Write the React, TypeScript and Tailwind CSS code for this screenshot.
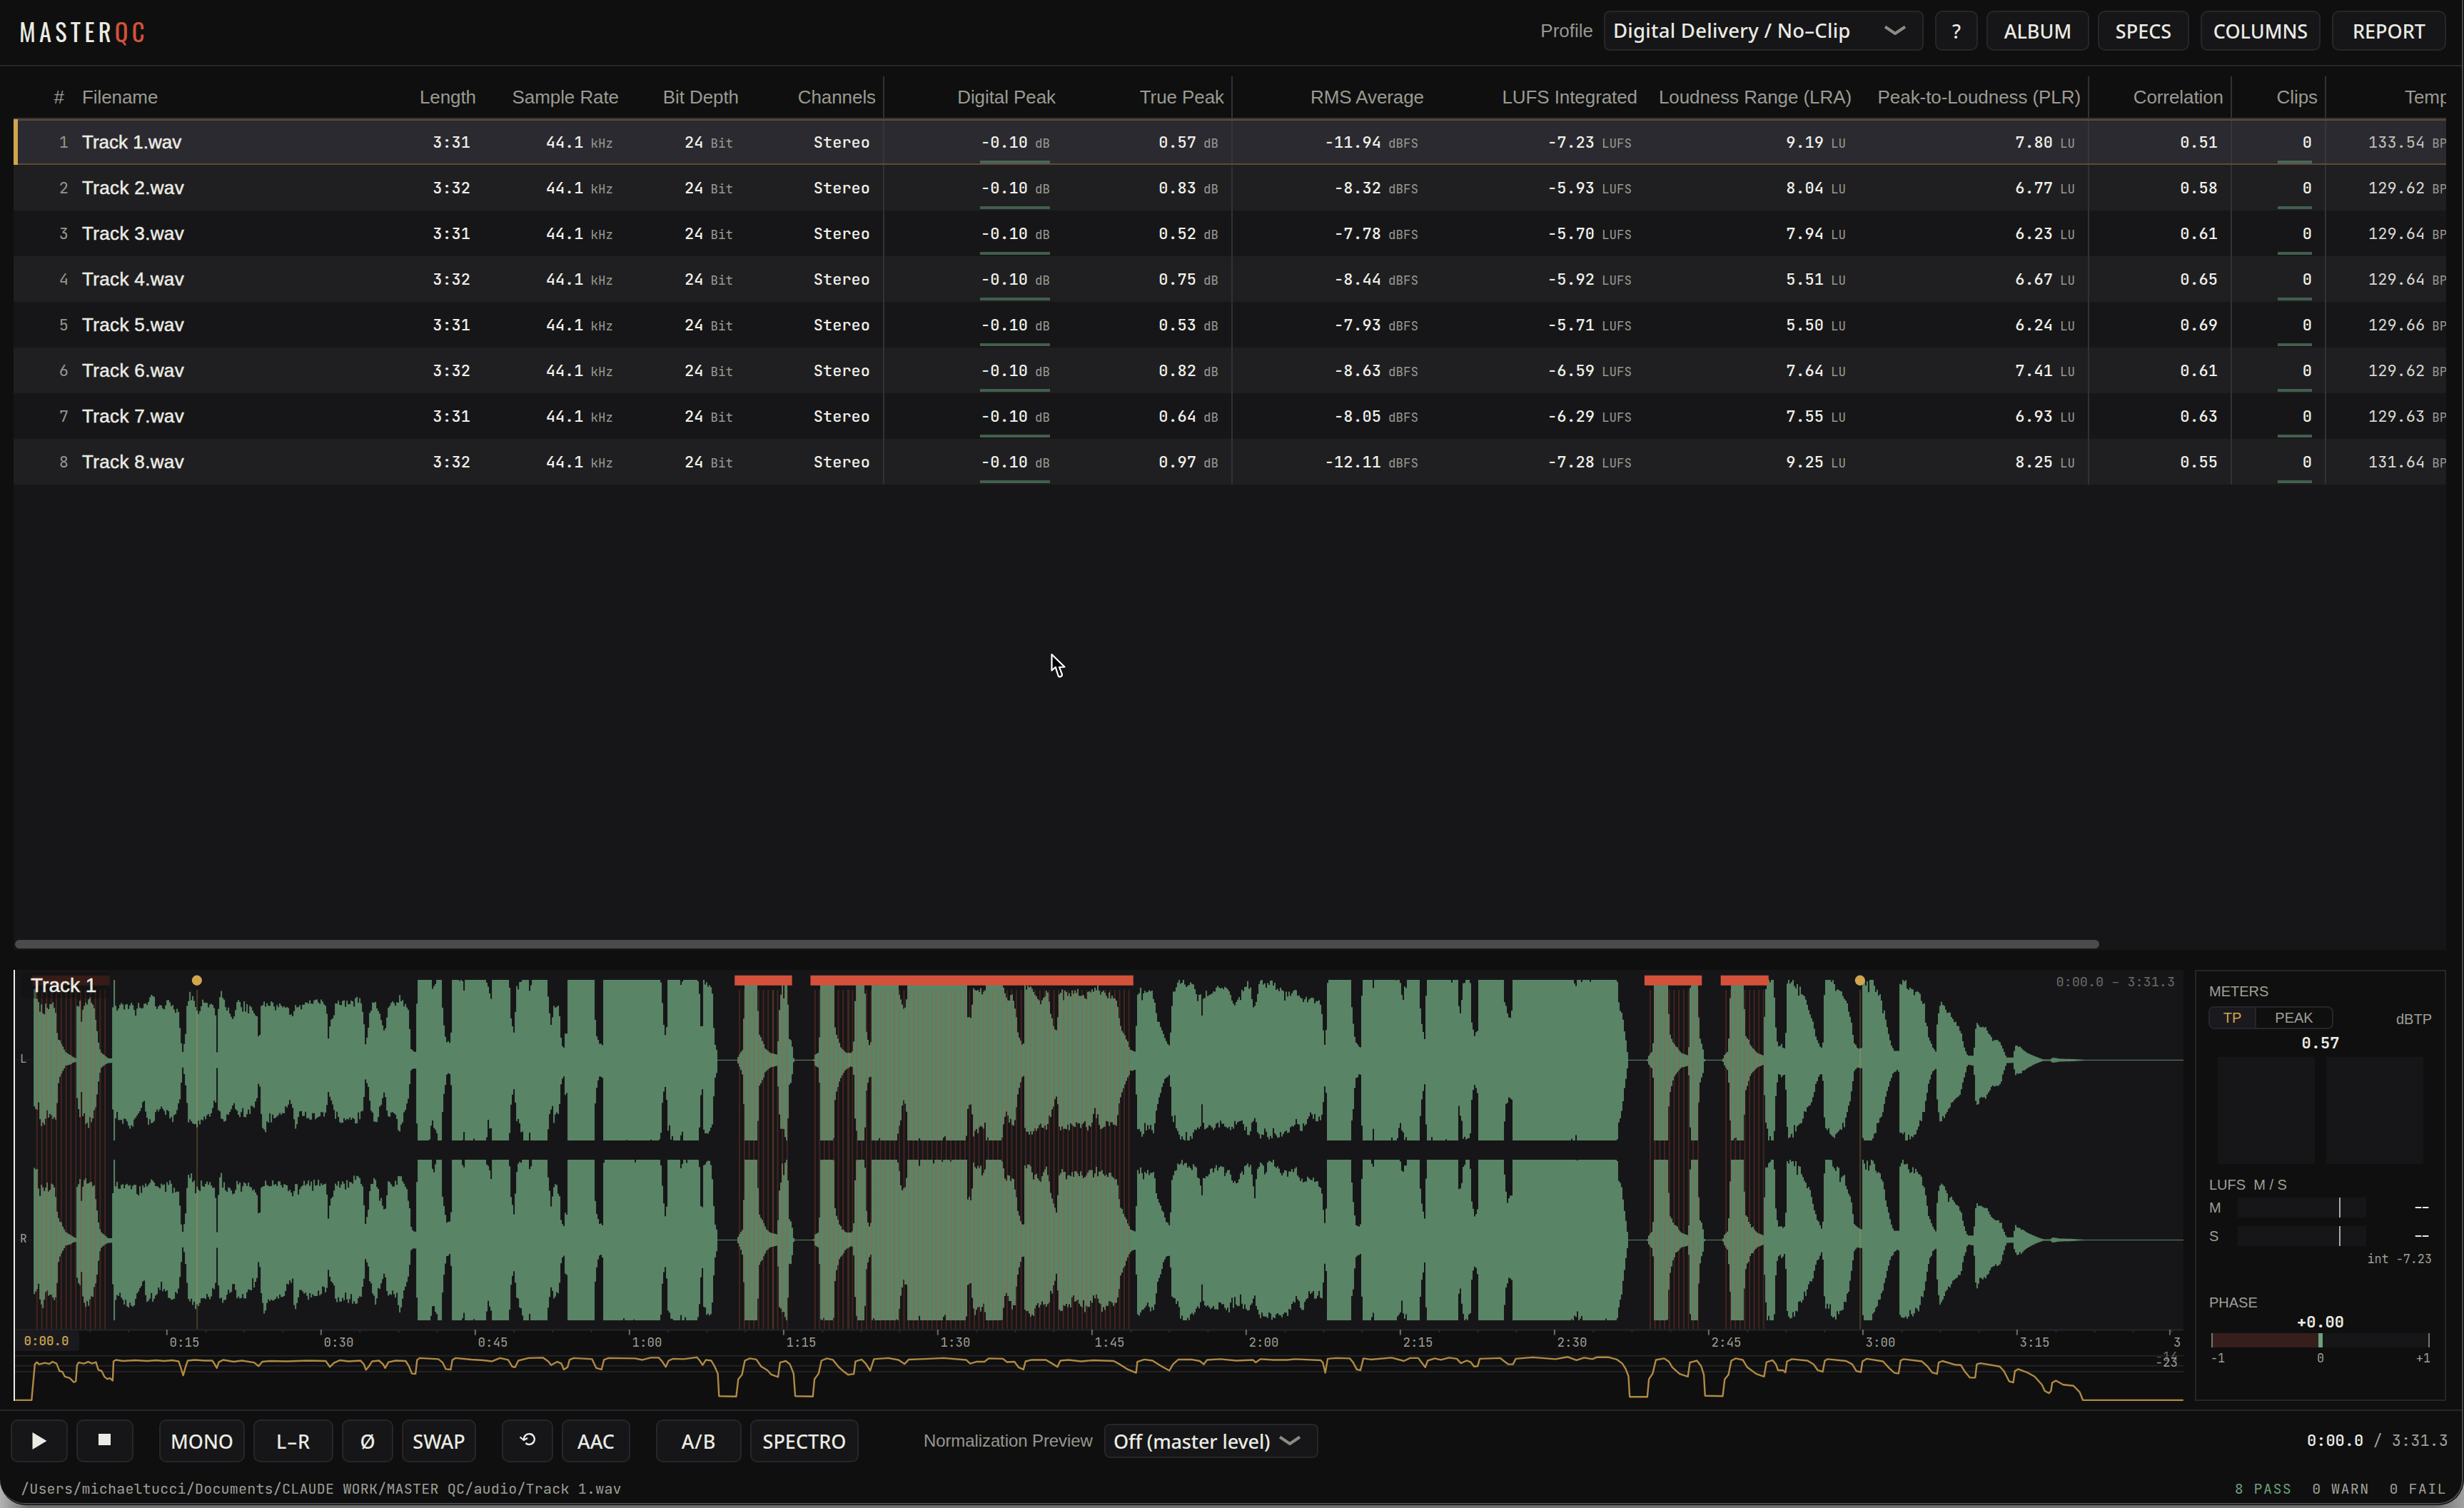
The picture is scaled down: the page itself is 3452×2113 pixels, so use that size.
import React from "react";
import type { ReactNode } from "react";

const SANS = "font-['Liberation_Sans',Arial,sans-serif]";
const MONO = "font-['JetBrains_Mono','Noto_Sans_Mono','DejaVu_Sans_Mono',monospace]";
const UI = "font-['Noto_Sans','Open_Sans',sans-serif]";

/* ---------- table ---------- */

type Track = [string, string, string, string, string, string, string, string, string];
// length, true peak, rms, lufs, lra, plr, correlation, tempo, digital peak
const tracks: Track[] = [
  ["3:31", "0.57", "-11.94", "-7.23", "9.19", "7.80", "0.51", "133.54", "-0.10"],
  ["3:32", "0.83", "-8.32", "-5.93", "8.04", "6.77", "0.58", "129.62", "-0.10"],
  ["3:31", "0.52", "-7.78", "-5.70", "7.94", "6.23", "0.61", "129.64", "-0.10"],
  ["3:32", "0.75", "-8.44", "-5.92", "5.51", "6.67", "0.65", "129.64", "-0.10"],
  ["3:31", "0.53", "-7.93", "-5.71", "5.50", "6.24", "0.69", "129.66", "-0.10"],
  ["3:32", "0.82", "-8.63", "-6.59", "7.64", "7.41", "0.61", "129.62", "-0.10"],
  ["3:31", "0.64", "-8.05", "-6.29", "7.55", "6.93", "0.63", "129.63", "-0.10"],
  ["3:32", "0.97", "-12.11", "-7.28", "9.25", "8.25", "0.55", "131.64", "-0.10"],
];

const GRID =
  "grid grid-cols-[85px_396px_179px_200px_168px_192px_252px_236px_280px_299px_300px_321px_200px_132px_168px]";

const headers: { label: string; line?: boolean }[] = [
  { label: "Length" },
  { label: "Sample Rate" },
  { label: "Bit Depth" },
  { label: "Channels", line: true },
  { label: "Digital Peak" },
  { label: "True Peak", line: true },
  { label: "RMS Average" },
  { label: "LUFS Integrated" },
  { label: "Loudness Range (LRA)" },
  { label: "Peak-to-Loudness (PLR)", line: true },
  { label: "Correlation", line: true },
  { label: "Clips", line: true },
];

function Unit({ children }: { children: ReactNode }) {
  return <span className="mt-[4px] ml-[10px] text-[17.5px] leading-none text-[#9a9a93]">{children}</span>;
}

function Cell({
  value,
  unit,
  line,
  mark,
  selected,
}: {
  value: string;
  unit?: string;
  line?: boolean;
  mark?: string;
  selected?: boolean;
}) {
  return (
    <div
      className={`relative flex h-full items-center justify-end ${
        line ? `border-r-2 pr-[18px] ${selected ? "border-[#36363b]" : "border-[#323235]"}` : "pr-5"
      }`}
    >
      <span className="font-medium text-[#f0f0ea]">{value}</span>
      {unit && <Unit>{unit}</Unit>}
      {mark && (
        <span
          className={`absolute bottom-[2px] h-1 ${line ? "right-[18px]" : "right-5"} ${mark} ${
            selected ? "bg-[#4b6658]" : "bg-[#425f4d]"
          }`}
        />
      )}
    </div>
  );
}

function TrackTable() {
  return (
    <div className="h-[1224px] w-[3408px] overflow-hidden bg-[#161618]">
      <div
        className={`${GRID} ${SANS} h-[60px] border-b-2 border-[#333338] bg-[#0f0f0f] text-[26px] tracking-[-0.08px] text-[#9a9a93]`}
      >
        <div className="flex items-center justify-end pr-[14px]">#</div>
        <div className="flex items-center pl-[11px]">Filename</div>
        {headers.map((h) => (
          <div
            key={h.label}
            className={`flex items-center justify-end whitespace-nowrap ${
              h.line ? "border-r-2 border-[#323235] pr-[10px]" : "pr-3"
            }`}
          >
            {h.label}
          </div>
        ))}
        <div className="flex items-center overflow-hidden pl-[110px]">Tempo</div>
      </div>
      {tracks.map((t, i) => {
        const s = i === 0;
        return (
          <div
            key={i}
            className={`${GRID} ${MONO} relative h-16 text-[22px] ${
              s ? "bg-[#2b2a30]" : i % 2 ? "bg-[#1f1f21]" : "bg-[#161618]"
            }`}
          >
            <div className="flex items-center justify-end pr-[8px] text-[#96968f]">{i + 1}</div>
            <div
              className={`${SANS} flex items-center pl-[11px] text-[26px] text-[#ebebe4] [-webkit-text-stroke:0.5px_#ebebe4] ${
                s ? "" : "tracking-[0.35px]"
              }`}
            >
              Track {i + 1}.wav
            </div>
            <Cell value={t[0]} />
            <Cell value="44.1" unit="kHz" />
            <Cell value="24" unit="Bit" />
            <Cell value="Stereo" line selected={s} />
            <Cell value={t[8]} unit="dB" mark="w-[98px]" selected={s} />
            <Cell value={t[1]} unit="dB" line selected={s} />
            <Cell value={t[2]} unit="dBFS" />
            <Cell value={t[3]} unit="LUFS" />
            <Cell value={t[4]} unit="LU" />
            <Cell value={t[5]} unit="LU" line selected={s} />
            <Cell value={t[6]} line selected={s} />
            <Cell value="0" line mark="w-12" selected={s} />
            <div className="flex items-center overflow-hidden pl-[59px]">
              <span className={s ? "text-[#c0c0ba]" : "text-[#d8d8d2]"}>{t[7]}</span>
              <Unit>BPM</Unit>
            </div>
            {s && (
              <>
                <span className="absolute inset-0 border-y-2 border-[#5b4b35]" />
                <span className="absolute inset-y-0 left-0 w-[6px] bg-[#d0a54e]" />
              </>
            )}
          </div>
        );
      })}
      <div className="mt-[638px] ml-[2px] h-3 w-[2920px] rounded-full bg-[#4b4b4b]" />
    </div>
  );
}

/* ---------- waveform ---------- */

// Envelope breakpoints: [x, upper, lower]; 1.742 x-units per pixel, full scale is 217.
const SECTIONS: { at: number; pts: number[] }[] = [
  {
    at: 0,
    pts: [
      82,190,140, 92,190,140, 93,95,85, 97,155,175, 105,125,178, 112,155,140, 117,140,150, 128,155,155, 134,130,165,
      138,70,110, 142,55,50, 150,40,35, 158,22,15, 170,14,12, 178,8,6, 184,5,5, 186,140,100, 194,160,150, 198,85,60,
      201,155,165, 215,165,178, 228,150,140, 234,90,110, 240,35,40, 246,20,20, 255,12,12, 262,5,8, 273,5,7,
      274,217,217, 280,217,217, 280.5,150,155, 300,145,165, 320,145,182, 335,145,145, 351,150,105, 355,145,165,
      370,172,170, 385,140,130, 405,158,140, 420,145,165, 435,125,130, 440,50,70, 445,18,12, 452,80,70, 457,182,165,
      470,165,170, 484,130,187, 490,155,160, 510,150,155, 524,130,125, 528,20,20, 532,150,150, 538,180,165,
      550,140,155, 570,120,120, 575,155,150, 600,150,150, 625,125,110, 631,40,40, 636,150,150, 643,155,208,
      650,150,170, 670,155,150, 690,150,150, 705,130,110, 712,115,120, 718,150,188, 730,145,140, 745,155,155,
      770,155,150, 795,155,145, 800,55,80, 805,110,110, 813,120,120, 816,150,160, 835,160,165, 850,150,165,
      873,180,165, 885,130,130, 890,40,55, 896,70,60, 903,155,130, 912,160,175, 925,130,140, 935,80,90, 940,85,100,
      945,150,160, 960,150,140, 975,170,200, 985,155,140, 995,130,100, 1002,30,25, 1010,22,22, 1015,23,25,
      1016,217,217, 1048,217,217, 1055,195,175, 1063,217,200, 1066,217,217, 1077,217,217, 1079,110,120, 1088,50,40, 1099,45,38,
      1101,217,217, 1127,217,217, 1130,185,195, 1133,217,217, 1185,217,217, 1190,200,180, 1197,160,190,
      1199,217,217, 1241,217,217, 1246,110,110, 1254,65,75, 1258,190,155, 1272,217,190, 1275,217,217, 1289,217,217,
      1292,185,180, 1295,217,217, 1333,217,217, 1337,150,170, 1345,75,110, 1348,150,165, 1363,140,135, 1368,50,60,
      1374,30,35, 1377,70,90, 1384,70,92, 1385,217,217, 1448,217,217, 1452,80,90, 1460,45,40, 1469,38,45,
      1471,217,217, 1567,217,217,
    ],
  },
  {
    at: 1567.8,
    pts: [
      0,217,217, 43,217,217, 47,150,120, 53,60,65, 58,90,110, 60,217,190, 72,217,212, 75,217,217, 92,217,217,
      94,143,145, 96,217,217, 134,217,217, 138,190,190, 141,90,100, 146,92,68, 148,210,190, 160,205,200, 168,205,205,
      171,110,120, 176,40,50, 182,20,20, 183,1,1, 229,1,1, 233,12,12, 244,30,40, 248,217,217, 279,217,217, 283,70,70,
      292,50,50, 300,30,30, 310,20,20, 328,15,15, 332,130,170, 340,200,190, 345,170,185, 347,217,217, 353,217,217, 355,60,70,
      362,50,60, 367,15,15, 368,1,1, 416,1,1, 420,15,15, 430,22,22, 432,217,217, 465,217,217, 469,80,100, 480,40,50,
      495,20,25, 510,20,15, 516,60,50, 518,200,200, 522,217,217, 541,217,217, 545,80,80, 551,35,50, 557,50,40, 559,217,217,
      621,217,217, 628,160,160, 636,130,110, 643,170,140, 646,217,217, 671,217,217, 674,205,210, 677,217,217,
      732,217,217, 735,217,200, 738,217,217, 789,217,217, 793,115,120, 802,110,120, 805,205,205, 815,195,190,
      834,190,180, 837,217,217, 875,217,217, 885,165,135, 900,170,180, 908,145,170, 915,75,90, 924,45,50, 930,40,40,
      932,200,190, 950,190,200, 970,160,170, 985,190,180, 1000,100,130, 1010,75,90, 1016,190,190, 1040,175,180,
      1060,185,170, 1080,170,190, 1105,200,150, 1120,180,190, 1140,175,170, 1155,170,180, 1165,90,100, 1180,55,55,
      1190,28,30, 1203,22,25, 1205,185,190, 1215,188,200, 1230,180,185, 1246,185,190, 1255,110,120, 1268,80,70,
      1275,55,45, 1286,40,40, 1291,170,150, 1300,195,175, 1312,215,214, 1330,205,216, 1345,200,200, 1355,175,180,
      1363,165,170, 1365,80,75, 1368,175,180, 1400,195,180, 1412,205,170, 1430,180,190, 1448,150,170, 1460,180,170,
      1480,214,200, 1492,130,150, 1505,216,216, 1520,200,200, 1534,216,210, 1560,180,200,
    ],
  },
  {
    at: 2961.4,
    pts: [
      180,180,200, 200,190,160, 215,160,190, 235,165,150, 262,150,160, 268,60,100, 273,22,25, 275,217,217, 333,217,217,
      338,120,150, 345,45,50, 355,38,38, 360,40,40, 361,217,217, 385,217,217, 388,190,195, 391,217,217, 446,217,217,
      455,214,190, 457,217,217, 460,145,150, 463,217,217, 468,195,195, 471,217,217, 501,217,217, 505,110,120, 516,45,50,
      518,217,217, 595,217,217, 598,135,130, 604,135,150, 606,200,200, 612,217,217, 625,217,205, 628,110,110,
      635,65,65, 643,80,90, 644,217,217, 706,217,217, 712,140,130, 720,110,100, 729,130,110, 730,217,217, 879,217,217,
      884,207,197, 887,217,217, 984,217,217, 987,150,180, 994,145,150, 998,110,110, 1004,60,60, 1009,20,20, 1010,1,1, 1057,1,1,
      1062,15,15, 1071,25,25, 1075,217,217, 1106,217,217, 1112,70,90, 1125,40,40, 1140,20,20, 1158,12,15, 1162,200,190,
      1165,217,217, 1181,217,217, 1184,60,70, 1192,40,40, 1196,15,20, 1197,1,1, 1241,1,1, 1246,15,15, 1255,25,30,
      1258,120,120, 1262,217,217, 1292,217,217, 1297,70,80, 1310,40,40, 1325,20,20, 1342,12,12, 1344,180,150,
      1350,205,210, 1360,217,217, 1367,217,217, 1370,100,110, 1376,40,40, 1385,40,45, 1395,30,40, 1397,200,195, 1405,216,214,
      1425,200,185, 1440,170,150, 1460,110,110, 1470,60,60, 1485,25,30,
    ],
  },
  {
    at: 4445.6,
    pts: [
      2,50,60, 5,175,150, 8,217,190, 22,217,195, 30,200,212, 45,180,190, 55,165,175, 65,130,130, 72,100,80, 78,45,30,
      85,35,20, 97,30,22, 99,217,210, 110,205,217, 123,217,217, 130,185,190, 145,170,150, 155,110,100, 165,55,60,
      175,25,30, 189,25,30, 190,200,200, 197,217,210, 215,190,210, 235,180,190, 250,145,130, 260,60,60, 270,35,30,
      279,20,22, 281,120,130, 288,155,170, 300,140,150, 320,110,110, 338,80,90, 348,30,40, 355,12,12, 370,12,15,
      372,50,60, 376,100,137, 385,90,105, 400,90,100, 415,55,70, 435,50,65, 445,20,25, 450,7,8, 467,7,7, 470,38,38,
      485,32,35, 500,20,22, 520,10,10, 540,2,2, 558,2,2, 561,7,7, 580,4,4, 610,3,3, 640,1,1, 883,1,1,
    ],
  },
];

const ENVELOPE: [number, number, number][] = SECTIONS.flatMap((s) => {
  const out: [number, number, number][] = [];
  for (let i = 0; i < s.pts.length; i += 3) out.push([s.pts[i] + s.at, s.pts[i + 1], s.pts[i + 2]]);
  return out;
});

function wavePath(center: number, firstSeed: number) {
  let seed = firstSeed;
  const rand = () => {
    seed = (seed * 1103515245 + 12345) % 2147483648;
    return seed / 2147483648;
  };
  const jitter = (a: number) => {
    if (a >= 216.5) return rand() > 0.975 ? 217 - rand() * 12 : 217;
    if (a < 30) return a;
    const d = (rand() - 0.5) * (a > 120 ? 20 : 8) - (rand() > 0.9 && a > 120 ? 16 : 0);
    return Math.max(2, Math.min(217, a + d));
  };
  const top: string[] = [];
  const bottom: string[] = [];
  let k = 0;
  const step = 3.484;
  for (let x = 82; x < 5329; x += step) {
    while (k < ENVELOPE.length - 2 && ENVELOPE[k + 1][0] <= x) k++;
    const [x0, u0, d0] = ENVELOPE[k];
    const [x1, u1, d1] = ENVELOPE[k + 1];
    const f = Math.max(0, Math.min(1, (x - x0) / (x1 - x0)));
    const u = jitter(u0 + (u1 - u0) * f);
    const d = jitter(d0 + (d1 - d0) * f);
    top.push(`L${x.toFixed(1)} ${(center - u).toFixed(1)}H${(x + step).toFixed(1)}`);
    bottom.push(`L${(x + step).toFixed(1)} ${(center + d).toFixed(1)}H${x.toFixed(1)}`);
  }
  return `M82 ${center}${top.join("")}${bottom.reverse().join("")}Z`;
}

const LOUDNESS: { at: number; pts: number[] }[] = [
  {
    at: 0,
    pts: [
      37,1277, 77,1277, 80,1240, 85,1180, 90,1174, 95,1180, 110,1176, 120,1179, 128,1173, 138,1178, 145,1198, 152,1200,
      158,1213, 170,1217, 180,1228, 185,1226, 188,1182, 192,1175, 205,1178, 215,1173, 225,1178, 234,1174, 240,1195,
      248,1198, 255,1214, 262,1220, 268,1217, 275,1224, 277,1172, 283,1168, 300,1171, 330,1169, 360,1171, 380,1169,
      400,1171, 420,1169, 436,1172, 440,1185, 447,1210, 452,1190, 458,1170, 475,1168, 500,1170, 518,1170, 524,1180,
      529,1190, 534,1174, 545,1168, 570,1173, 590,1170, 620,1175, 631,1185, 640,1173, 660,1171, 700,1172, 750,1170,
      795,1171, 805,1187, 815,1176, 830,1169, 850,1172, 880,1170, 888,1180, 893,1195, 900,1186, 908,1172, 925,1170,
      935,1180, 940,1190, 948,1174, 965,1170, 990,1171, 998,1185, 1005,1205, 1014,1206, 1018,1168, 1024,1163,
      1070,1166, 1080,1175, 1088,1193, 1100,1194, 1104,1168, 1112,1163, 1150,1167, 1180,1169, 1200,1172, 1220,1163,
      1240,1168, 1250,1186, 1257,1188, 1265,1170, 1290,1163, 1325,1162, 1338,1172, 1345,1182, 1360,1173, 1370,1178,
      1376,1194, 1385,1188, 1390,1168, 1400,1163, 1445,1166, 1455,1190, 1468,1194, 1474,1168, 1485,1163, 1550,1164,
    ],
  },
  {
    at: 1567.8,
    pts: [
      0,1168, 20,1162, 40,1162, 48,1172, 57,1187, 64,1170, 75,1165, 100,1166, 133,1161, 140,1170, 147,1182, 155,1168,
      168,1170, 176,1185, 184,1205, 187,1266, 229,1267, 234,1220, 243,1208, 250,1170, 262,1164, 278,1167, 290,1186,
      305,1196, 315,1208, 331,1214, 336,1175, 350,1171, 360,1180, 369,1205, 373,1266, 416,1267, 420,1220, 430,1205,
      437,1170, 450,1164, 465,1168, 478,1186, 492,1200, 502,1208, 516,1206, 520,1172, 535,1167, 545,1178, 556,1197,
      565,1166, 600,1163, 625,1168, 640,1179, 650,1167, 680,1166, 735,1163, 790,1168, 800,1178, 815,1173, 835,1173,
      845,1164, 880,1165, 890,1174, 908,1173, 918,1188, 930,1194, 935,1172, 950,1168, 985,1168, 1000,1178, 1013,1187,
      1020,1170, 1040,1168, 1070,1172, 1100,1169, 1150,1171, 1165,1180, 1185,1194, 1205,1203, 1208,1173, 1225,1167,
      1245,1170, 1265,1184, 1286,1197, 1295,1180, 1308,1167, 1340,1167, 1360,1171, 1370,1180, 1378,1168, 1410,1166,
      1450,1170, 1490,1168, 1497,1175, 1508,1166, 1540,1168,
    ],
  },
  {
    at: 2961.4,
    pts: [
      180,1168, 200,1166, 262,1169, 267,1175, 273,1203, 279,1165, 300,1163, 333,1164, 341,1175, 350,1194, 359,1196,
      366,1164, 384,1167, 435,1162, 465,1171, 480,1163, 500,1163, 508,1175, 517,1188, 523,1170, 540,1164, 555,1168,
      575,1162, 594,1165, 604,1177, 618,1170, 628,1174, 636,1186, 645,1185, 650,1165, 700,1163, 710,1172, 720,1180,
      731,1180, 738,1165, 780,1161, 835,1166, 865,1160, 886,1169, 905,1162, 925,1166, 935,1161, 965,1161, 985,1167,
      998,1178, 1006,1192, 1013,1212, 1016,1268, 1059,1268, 1063,1220, 1072,1205, 1080,1168, 1100,1164, 1112,1173,
      1120,1188, 1138,1206, 1158,1213, 1163,1175, 1180,1170, 1190,1184, 1197,1208, 1200,1265, 1243,1266, 1248,1220,
      1257,1208, 1264,1170, 1275,1164, 1292,1168, 1303,1188, 1325,1206, 1344,1213, 1350,1174, 1365,1169, 1373,1180,
      1378,1196, 1390,1196, 1396,1202, 1400,1172, 1412,1166, 1450,1170, 1465,1180, 1475,1196, 1484,1199,
    ],
  },
  {
    at: 4445.6,
    pts: [
      3,1200, 8,1170, 15,1166, 60,1171, 75,1180, 85,1198, 96,1201, 100,1172, 110,1165, 150,1172, 165,1190, 178,1203,
      188,1205, 193,1170, 200,1166, 245,1172, 258,1185, 270,1202, 282,1206, 286,1175, 295,1171, 325,1181, 340,1182,
      350,1200, 362,1216, 375,1216, 379,1180, 388,1177, 435,1186, 445,1198, 458,1226, 468,1229, 472,1198, 480,1193,
      500,1201, 520,1213, 538,1235, 545,1252, 555,1258, 560,1252, 563,1230, 572,1224, 590,1235, 615,1238, 630,1255,
      638,1277, 883,1277,
    ],
  },
];

const LOUDNESS_POINTS = LOUDNESS.flatMap((s) => {
  const out: string[] = [];
  for (let i = 0; i < s.pts.length; i += 2) out.push(`${(s.pts[i] + s.at).toFixed(1)},${s.pts[i + 1]}`);
  return out;
}).join(" ");

// Clip marker runs, [first, last] in chart units.
const CLIP_RUNS: [number, number][] = [
  [90, 256],
  [1804.8, 1921],
  [1988.8, 2755],
  [4027.4, 4144],
  [4212.4, 4304],
];
const CLIP_LINES = CLIP_RUNS.flatMap(([a, b]) => {
  const n = Math.round((b - a) / 11.5);
  return Array.from({ length: n + 1 }, (_, i) => a + ((b - a) * i) / n);
});

const CLIP_BARS: [number, number][] = [
  [1793, 1933],
  [1978, 2766],
  [4013.5, 4153.5],
  [4199.5, 4316.5],
];

const TICKS = ["0:15", "0:30", "0:45", "1:00", "1:15", "1:30", "1:45", "2:00", "2:15", "2:30", "2:45", "3:00", "3:15"];

function Waveform() {
  return (
    <div className="relative h-[604px] w-[3040px] shrink-0 overflow-hidden bg-[#161618]">
      <svg className="absolute inset-0 h-full w-full" viewBox="33 114 5296 1165" preserveAspectRatio="none">
        <rect x="33" y="1086" width="5296" height="200" fill="#0f0f0f" />
        <rect x="33" y="356" width="5296" height="2" fill="#232326" />
        <rect x="33" y="843" width="5296" height="2" fill="#232326" />
        <path d={wavePath(358, 7)} fill="#5a8466" />
        <path d={wavePath(844, 91)} fill="#5a8466" />
        {CLIP_LINES.map((x) => (
          <rect key={x} x={x - 1.5} y="168" width="3.4" height="917" fill="#c8462f" fillOpacity="0.27" />
        ))}
        {[1886.8, 2071.8].map((x) => (
          <rect key={x} x={x - 1.5} y="168" width="3.4" height="917" fill="#d0a54e" fillOpacity="0.15" />
        ))}
        {[481, 4540].map((x) => (
          <g key={x}>
            <rect x={x - 2} y="168" width="4" height="917" fill="#d0a54e" fillOpacity="0.24" />
            <ellipse cx={x - 0.5} cy="142.5" rx="12.4" ry="13.8" fill="#d0a54e" />
          </g>
        ))}
        <rect x="79" y="129" width="188" height="27" fill="#52231d" />
        {CLIP_BARS.map(([a, b]) => (
          <rect key={a} x={a} y="129" width={b - a} height="27" fill="#d3513a" />
        ))}
        <rect x="33" y="1085" width="5296" height="4" fill="#26262a" />
        {Array.from({ length: 56 }, (_, i) => (
          <rect key={i} x={30 + (i + 1) * 94.08} y="1089" width="3.5" height="4" fill="#333338" />
        ))}
        {TICKS.map((t, i) => (
          <rect key={t} x={405.5 + i * 376.3} y="1086" width="3.5" height="15" fill="#6b6b68" />
        ))}
        <rect x="5294" y="1086" width="3.5" height="15" fill="#6b6b68" />
        {[1155, 1182, 1198].map((y) => (
          <rect key={y} x="33" y={y} width="5296" height="3.9" fill="#222225" />
        ))}
        <polyline
          points={LOUDNESS_POINTS}
          fill="none"
          stroke="#b08a43"
          strokeWidth="2.4"
          strokeLinejoin="round"
          vectorEffect="non-scaling-stroke"
        />
      </svg>

      <div className={`${MONO} text-[17.5px] leading-none text-[#9f9f98]`}>
        <span className="absolute top-[117px] left-[9px] text-[16px]">L</span>
        <span className="absolute top-[369px] left-[9px] text-[16px]">R</span>
        <span className="absolute top-[8px] right-[12px] text-[18.5px] text-[#6c6c68]">0:00.0 – 3:31.3</span>
        {TICKS.map((t, i) => (
          <span key={t} className="absolute top-[513px]" style={{ left: 218.5 + i * 216 }}>
            {t}
          </span>
        ))}
        <span className="absolute top-[513px] left-[3026px] w-[14px] overflow-hidden whitespace-nowrap">3:30</span>
        <span className="absolute top-[533px] right-[8px] text-[#6c6c68]">-14</span>
        <span className="absolute top-[541px] right-[8px] bg-[#0f0f0f]/30">-23</span>
        <div className="absolute top-[506px] left-0 flex h-7 w-[92px] items-center justify-center rounded-[4px] bg-[#1a1a1e] font-medium text-[#d0a54e]">
          0:00.0
        </div>
      </div>
      <div
        className={`${SANS} absolute top-1 left-[11px] flex h-9 w-[123px] items-center rounded-md bg-[#0f0f0f]/40 pl-[13px] text-[28px] whitespace-nowrap text-[#ebebe4] [-webkit-text-stroke:0.5px_#ebebe4]`}
      >
        Track 1
      </div>
      <div className="absolute inset-y-0 left-0 w-[2px] bg-[#f0f0ea]" />
    </div>
  );
}

/* ---------- meters ---------- */

function LufsRow({ label }: { label: string }) {
  return (
    <div className="flex h-7 items-center">
      <span className="w-[40px]">{label}</span>
      <div className="h-7 w-[180px] bg-[#161618]">
        <div className="ml-[142px] h-full w-[2px] bg-[#a9a9a3]" />
      </div>
      <span className={`${MONO} ml-auto pr-[2px] text-[20px] font-medium text-[#ebebe4]`}>--</span>
    </div>
  );
}

function Meters() {
  return (
    <div
      className={`${SANS} flex h-[604px] w-[352px] flex-col border-2 border-[#26262a] bg-[#0f0f0f] px-[18px] pt-[16px] text-[20px] leading-6 text-[#9f9f98]`}
    >
      <div className="h-6">METERS</div>
      <div className="mt-[9px] flex h-8 items-center justify-between">
        <div className="-ml-[1px] flex h-8 w-[175px] overflow-hidden rounded-lg border-2 border-[#26262a]">
          <div className="flex w-[65px] items-center justify-center border-r-2 border-[#26262a] bg-[#1a1a1e] text-[#d0a54e]">
            TP
          </div>
          <div className="flex flex-1 items-center justify-center">PEAK</div>
        </div>
        <span className="mt-1">dBTP</span>
      </div>
      <div className={`${MONO} mt-[8px] text-center text-[22px] font-semibold text-[#ebebe4]`}>0.57</div>
      <div className="mt-[7px] flex justify-center gap-4">
        <div className="h-[150px] w-[136px] bg-[#161618]" />
        <div className="h-[150px] w-[136px] bg-[#161618]" />
      </div>
      <div className="mt-[17px] whitespace-pre">{"LUFS  M / S"}</div>
      <div className="mt-[6px]">
        <LufsRow label="M" />
      </div>
      <div className="mt-3">
        <LufsRow label="S" />
      </div>
      <div className={`${MONO} mt-[6px] text-right text-[16.8px]`}>int -7.23</div>
      <div className="mt-[37px]">PHASE</div>
      <div className={`${MONO} mt-[4px] text-center text-[22px] font-semibold text-[#ebebe4]`}>+0.00</div>
      <div className="mx-[3px] mt-[3px] flex h-5 w-[306px] border-x-2 border-[#77776f] bg-[#161618]">
        <div className="w-[148px] bg-[#361e1d]" />
        <div className="w-[6px] bg-[#6aa37d]" />
      </div>
      <div className={`${MONO} mx-[2px] mt-[3px] flex justify-between text-[16.8px]`}>
        <span>-1</span>
        <span>0</span>
        <span>+1</span>
      </div>
    </div>
  );
}

/* ---------- controls ---------- */

function Button({ className, children }: { className: string; children: ReactNode }) {
  return (
    <div
      className={`${UI} flex shrink-0 items-center justify-center rounded-[10px] border-2 border-[#26262b] bg-[#161618] text-[27px] leading-none font-medium text-[#ebebe4] ${className}`}
    >
      {children}
    </div>
  );
}

function Chevron() {
  return (
    <svg className="h-4 w-8" viewBox="0 0 32 16" fill="none" stroke="#8b8b83" strokeWidth="4">
      <path d="M2 2.5 L16 12 L30 2.5" strokeLinejoin="round" />
    </svg>
  );
}

function Select({ className, children }: { className: string; children: ReactNode }) {
  return (
    <div
      className={`${UI} flex shrink-0 items-center justify-between rounded-lg border-2 border-[#26262b] bg-[#161618] pl-[11px] leading-none font-medium text-[#ebebe4] ${className}`}
    >
      {children}
      <Chevron />
    </div>
  );
}

function Header() {
  return (
    <header className="flex h-[93px] items-start border-b-2 border-[#26262a] pt-[15px] pr-[22px]">
      <div className="ml-[27px] font-['Oswald','Roboto_Condensed',sans-serif] text-[34.5px] leading-[58px] tracking-[5.3px] text-[#ebebe4]">
        MASTER<span className="text-[#d3513a]">QC</span>
      </div>
      <span className={`${SANS} mr-[15px] ml-auto text-[26px] leading-[56px] text-[#96968f]`}>Profile</span>
      <Select className="h-14 w-[448px] pr-[22px] text-[27.5px] tracking-[0.25px]">Digital Delivery / No–Clip</Select>
      <Button className="ml-4 h-14 w-[60px]">?</Button>
      <Button className="ml-3 h-14 w-[144px]">ALBUM</Button>
      <Button className="ml-3 h-14 w-[128px]">SPECS</Button>
      <Button className="ml-4 h-14 w-[168px]">COLUMNS</Button>
      <Button className="ml-4 h-14 w-[160px]">REPORT</Button>
    </header>
  );
}

function Transport() {
  return (
    <div className="mt-3 flex h-[86px] items-start border-t-2 border-[#26262a] pt-3 pr-[19px] pl-[15px]">
      <Button className="h-[60px] w-20">
        <svg className="h-6 w-[21px]" viewBox="0 0 21 24">
          <path d="M0.5 0 L20.5 12 L0.5 24 Z" fill="#ebebe4" />
        </svg>
      </Button>
      <Button className="ml-3 h-[60px] w-20">
        <span className="mb-[5px] ml-[-1px] h-4 w-[17px] bg-[#ebebe4]" />
      </Button>
      <Button className="ml-9 h-[60px] w-[120px]">MONO</Button>
      <Button className="ml-3 h-[60px] w-[112px] tracking-[1px]">L–R</Button>
      <Button className="ml-3 h-[60px] w-[72px]">Ø</Button>
      <Button className="ml-3 h-[60px] w-[104px]">SWAP</Button>
      <Button className="ml-9 h-[60px] w-[72px]">
        <svg className="mb-[4px] h-5 w-6" viewBox="0 0 24 20" fill="none" stroke="#ebebe4" strokeWidth="2.4">
          <path d="M7 10 A7.4 7.4 0 1 1 9.4 15" />
          <path d="M1.5 6.5 L6.8 11 L12 8" strokeWidth="2.2" />
        </svg>
      </Button>
      <Button className="ml-3 h-[60px] w-24">AAC</Button>
      <Button className="ml-9 h-[60px] w-[120px] tracking-[1px]">A/B</Button>
      <Button className="ml-3 h-[60px] w-[152px]">SPECTRO</Button>
      <span className={`${SANS} ml-[91px] w-[253px] text-[24px] leading-[60px] tracking-[-0.1px] whitespace-nowrap text-[#96968f]`}>
        Normalization Preview
      </span>
      <Select className="mt-[6px] h-12 w-[300px] pr-[22px] text-[27px] tracking-[-0.15px]">Off (master level)</Select>
      <div className={`${MONO} ml-auto text-[22px] leading-[60px] whitespace-pre text-[#9f9f98]`}>
        <span className="font-medium text-[#f0f0ea]">0:00.0</span> / 3:31.3
      </div>
    </div>
  );
}

function StatusBar() {
  return (
    <div className={`${MONO} flex items-center justify-between pr-[21px] pl-[29px] text-[20px] leading-[50px] text-[#9f9f98]`}>
      <span className="tracking-[0.2px]">/Users/michaeltucci/Documents/CLAUDE WORK/MASTER QC/audio/Track 1.wav</span>
      <div className="flex gap-[28px] tracking-[1.4px]">
        <span className="text-[#6aa37d]">8 PASS</span>
        <span>0 WARN</span>
        <span>0 FAIL</span>
      </div>
    </div>
  );
}

export default function App() {
  return (
    <div className="relative h-[2113px] w-[3452px] overflow-hidden bg-[linear-gradient(to_right,#b4b4b4,#6f6f6f_40px,#6f6f6f_3410px,#a0a0a0)]">
      <div className="-mt-10 h-[2149px] w-[3452px] overflow-hidden rounded-b-[36px] border border-t-0 border-l-0 border-black bg-[#0f0f0f]">
        <div className="h-[2148px] w-[3451px] overflow-hidden rounded-b-[35px] border-r-2 border-b-2 border-[#4a4a4c] pt-10">
          <Header />
          <main className="mt-[14px] ml-[19px] w-[3408px]">
            <TrackTable />
            <div className="mt-7 flex justify-between">
              <Waveform />
              <Meters />
            </div>
          </main>
          <Transport />
          <StatusBar />
        </div>
      </div>
      <svg className="absolute top-[914px] left-[1471px] h-[38px] w-[24px]" viewBox="0 0 24 38">
        <path
          d="M2.5 3 L2.5 25.5 L7.8 20.8 L11.5 32.5 Q12.5 35 15 34 Q17.5 33 16.8 30.5 L13 20.8 L20.5 20.5 Z"
          fill="#000"
          stroke="#fff"
          strokeWidth="2.2"
          strokeLinejoin="round"
        />
      </svg>
    </div>
  );
}
